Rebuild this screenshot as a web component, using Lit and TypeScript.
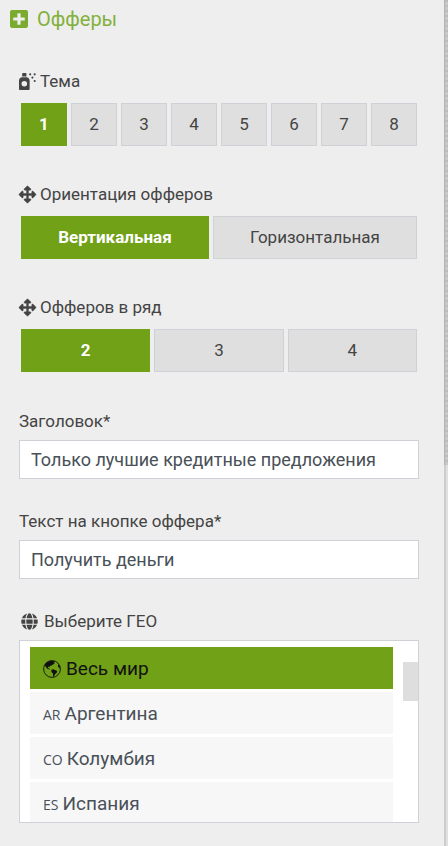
import { LitElement, html, css, svg, nothing } from "lit";
import { customElement, state } from "lit/decorators.js";
import { classMap } from "lit/directives/class-map.js";

const icons = {
  plus: {
    box: "0 32 448 448",
    body: svg`<path d="M400 32H48C21.500 32 0 53.500 0 80v352c0 26.500 21.500 48 48 48h352c26.500 0 48-21.500 48-48V80c0-26.500-21.500-48-48-48zm-32 252c0 6.600-5.400 12-12 12h-92v92c0 6.600-5.400 12-12 12h-56c-6.600 0-12-5.400-12-12v-92H92c-6.600 0-12-5.400-12-12v-56c0-6.600 5.400-12 12-12h92v-92c0-6.600 5.400-12 12-12h56c6.600 0 12 5.400 12 12v92h92c6.600 0 12 5.400 12 12v56z"/>`,
  },
  spray: {
    box: "0 0 512 512",
    body: svg`<path d="M120 0h80c14 0 24 10 24 24v80H96V24C96 10 106 0 120 0z"/>
      <path fill-rule="evenodd" d="M96 128h128c53 0 96 43 96 96v256c0 18-14 32-32 32H32c-18 0-32-14-32-32V224c0-53 43-96 96-96zm64 114a84 84 0 1 0 0 168 84 84 0 1 0 0-168z"/>
      <circle cx="336" cy="40" r="32"/><circle cx="472" cy="40" r="32"/>
      <circle cx="404" cy="138" r="32"/><circle cx="472" cy="240" r="32"/>`,
  },
  arrows: {
    box: "0 0 512 512",
    body: svg`<path stroke="currentColor" stroke-width="14" d="M352.201 425.775l-79.196 79.196c-9.373 9.373-24.568 9.373-33.941 0l-79.196-79.196c-15.119-15.119-4.411-40.971 16.971-40.970h51.162L228 284H127.196v51.162c0 21.382-25.851 32.090-40.971 16.971L7.029 272.937c-9.373-9.373-9.373-24.569 0-33.941L86.225 159.800c15.119-15.119 40.971-4.411 40.971 16.971V228H228V127.196h-51.230c-21.382 0-32.090-25.851-16.971-40.971l79.196-79.196c9.373-9.373 24.568-9.373 33.941 0l79.196 79.196c15.119 15.119 4.411 40.971-16.971 40.971h-51.162V228h100.804v-51.162c0-21.382 25.851-32.090 40.970-16.971l79.196 79.196c9.373 9.373 9.373 24.569 0 33.941L425.773 352.200c-15.119 15.119-40.971 4.411-40.970-16.971V284H284v100.804h51.230c21.382 0 32.090 25.851 16.971 40.971z"/>`,
  },
  globe: {
    box: "-8 0 512 512",
    body: svg`<path d="M336.500 160C322 70.700 287.800 8 248 8s-74 62.700-88.500 152h177zM152 256c0 22.200 1.200 43.500 3.300 64h185.300c2.100-20.500 3.300-41.800 3.300-64s-1.200-43.500-3.300-64H155.300c-2.100 20.500-3.300 41.800-3.300 64zm324.700-96c-28.600-67.900-86.500-120.400-158-141.600 24.400 33.800 41.200 84.700 50 141.600h108zM177.200 18.400C105.800 39.600 47.800 92.100 19.300 160h108c8.700-56.900 25.500-107.800 49.900-141.600zM487.400 192H372.700c2.100 21 3.300 42.500 3.300 64s-1.200 43-3.300 64h114.600c5.500-20.500 8.600-41.800 8.600-64s-3.100-43.500-8.500-64zM120 256c0-21.500 1.200-43 3.300-64H8.600C3.200 212.500 0 233.800 0 256s3.200 43.500 8.600 64h114.600c-2-21-3.200-42.500-3.200-64zm39.500 96c14.500 89.300 48.700 152 88.500 152s74-62.700 88.500-152h-177zm159.300 141.600c71.400-21.200 129.400-73.700 158-141.600h-108c-8.800 56.900-25.600 107.800-50 141.600zM19.300 352c28.600 67.900 86.500 120.400 158 141.600-24.400-33.800-41.200-84.700-50-141.600h-108z"/>`,
  },
  earth: {
    box: "0 0 18 18",
    body: svg`<circle cx="9" cy="9" r="8.400" fill="none" stroke="currentColor" stroke-width=".9"/>
      <path d="M1.500 5C3 2.600 5.500 1 8 .800L11.800 1.200 12 2.200 10.600 2.400 11.600 3.600 10 4.400 8.600 5.600 7.200 5.800 6.800 7 5.400 6.400 4.800 7.600 6 8.400 7.400 9.400 6.600 9.600 4 8.400 2.600 6.400z"/>
      <path d="M8.400 9.800L10.400 9.200 12 10 14.200 11 13.600 13 12 14.200 10.800 16.800 10 16.400 10 13.600 8.400 12z"/>
      <path d="M15.200 4L16.600 6 17.200 8.400 16 7.800 15 6.200z"/>`,
  },
};

type IconName = keyof typeof icons;

const icon = (name: IconName, size = "") => html`
  <svg class="icon ${size}" viewBox=${icons[name].box} aria-hidden="true">${icons[name].body}</svg>
`;

const countries = [
  { code: "", name: "Весь мир" },
  { code: "AR", name: "Аргентина" },
  { code: "CO", name: "Колумбия" },
  { code: "ES", name: "Испания" },
];

@customElement("app-root")
export class AppRoot extends LitElement {
  @state() private theme = "1";
  @state() private orientation = "Вертикальная";
  @state() private perRow = "2";
  @state() private country = "Весь мир";

  static styles = css`
    :host {
      display: block;
      box-sizing: border-box;
      min-height: 100vh;
      padding-right: 4px;
      background: linear-gradient(to right, #cdcdcd 2px, #e0e0e0 2px) right / 4px 100% no-repeat;
      color: #444;
      font: 17px/24px Roboto, "Liberation Sans", sans-serif;
      position: relative;
    }
    *, *::before { box-sizing: border-box; }
    .track {
      position: absolute;
      top: 0;
      right: 0;
      width: 4px;
      height: 55%;
      background: repeating-linear-gradient(#bdbdbd 0 2px, #c8c8c8 2px 5px);
      border-left: 1px solid #b4b4b4;
    }
    .panel {
      min-height: 100vh;
      padding: 0 25px 23px 19px;
      background: #eee;
    }
    .icon {
      flex: none;
      width: 17px;
      height: 17px;
      fill: currentColor;
      overflow: visible;
    }
    .icon.large { width: 18px; height: 18px; }
    .title {
      display: flex;
      align-items: center;
      gap: 9px;
      margin: 0 0 31px -9px;
      color: #82b13c;
      font-size: 20px;
      font-weight: 400;
      line-height: 38px;
    }
    .title .icon { color: #7aab2e; }
    .field { margin-bottom: 30px; }
    .choice { margin-bottom: 34px; }
    .choice .label { margin-bottom: 8px; }
    .choice + .field:not(.choice) { margin-top: 35px; }
    .field:last-child { margin-bottom: 0; }
    .label {
      display: flex;
      align-items: center;
      gap: 4px;
      margin-bottom: 7px;
    }
    .label.wide { gap: 6px; padding-left: 2px; }
    .options {
      display: flex;
      gap: 4px;
      padding: 2px;
    }
    .option {
      flex: 1 1 auto;
      height: 43px;
      padding: 0 0 2px;
      border: 1px solid #ced1d6;
      background: #dfdfdf;
      color: #444;
      font: inherit;
      cursor: pointer;
    }
    .equal .option { flex-basis: 0; }
    .option.on {
      border-color: #70a116;
      background: #70a116;
      color: #fff;
      font-weight: 700;
    }
    .text {
      display: block;
      width: 100%;
      height: 39px;
      padding: 0 11px;
      border: 1px solid #ced1d6;
      border-radius: 0;
      background: #fff;
      color: #495057;
      font: 18px/24px Roboto, "Liberation Sans", sans-serif;
    }
    .geo {
      position: relative;
      height: 183px;
      padding: 6px 25px 0 10px;
      overflow: hidden;
      border: 1px solid #ced1d6;
      background: #fff;
    }
    .thumb {
      position: absolute;
      top: 21px;
      right: 0;
      width: 15px;
      height: 39px;
      background: #dedede;
    }
    .list {
      display: grid;
      gap: 3px;
      margin: 0;
      padding: 0;
      list-style: none;
    }
    .country {
      display: flex;
      align-items: center;
      gap: 5px;
      width: 100%;
      height: 42px;
      padding: 2px 13px 0;
      border: 0;
      background: #f7f7f7;
      color: #495057;
      font: 19px/24px Roboto, "Liberation Sans", sans-serif;
      text-align: left;
      cursor: pointer;
    }
    .country.on { background: #70a116; color: #111; }
    .line {
      display: flex;
      align-items: baseline;
      gap: 4px;
    }
    .code { font: 14px/24px "Open Sans", "Noto Sans", sans-serif; }
  `;

  private options(
    label: string,
    name: IconName,
    values: string[],
    current: string,
    pick: (v: string) => void,
    equal = true,
  ) {
    return html`
      <div class="field choice" role="group" aria-label=${label}>
        <div class="label">${icon(name)}<span>${label}</span></div>
        <div class=${classMap({ options: true, equal })}>
          ${values.map(
            (v) => html`<button
              type="button"
              class=${classMap({ option: true, on: v === current })}
              aria-pressed=${v === current}
              @click=${() => pick(v)}
            >${v}</button>`,
          )}
        </div>
      </div>
    `;
  }

  render() {
    return html`
      <main class="panel">
        <h2 class="title">${icon("plus", "large")}<span>Офферы</span></h2>
        ${this.options("Тема", "spray", ["1", "2", "3", "4", "5", "6", "7", "8"], this.theme, (v) => (this.theme = v))}
        ${this.options("Ориентация офферов", "arrows", ["Вертикальная", "Горизонтальная"], this.orientation, (v) => (this.orientation = v), false)}
        ${this.options("Офферов в ряд", "arrows", ["2", "3", "4"], this.perRow, (v) => (this.perRow = v))}
        <div class="field">
          <label class="label" for="heading">Заголовок*</label>
          <input class="text" id="heading" type="text" required value="Только лучшие кредитные предложения" />
        </div>
        <div class="field">
          <label class="label" for="caption">Текст на кнопке оффера*</label>
          <input class="text" id="caption" type="text" required value="Получить деньги" />
        </div>
        <div class="field" role="group" aria-labelledby="geo">
          <div class="label wide">${icon("globe")}<span id="geo">Выберите ГЕО</span></div>
          <div class="geo">
            <ul class="list">
              ${countries.map(
                (c) => html`<li>
                  <button
                    type="button"
                    class=${classMap({ country: true, on: c.name === this.country })}
                    aria-pressed=${c.name === this.country}
                    @click=${() => (this.country = c.name)}
                  >
                    ${c.code ? nothing : icon("earth", "large")}
                    <span class="line">
                      ${c.code ? html`<span class="code">${c.code}</span>` : nothing}
                      <span>${c.name}</span>
                    </span>
                  </button>
                </li>`,
              )}
            </ul>
            <div class="thumb"></div>
          </div>
        </div>
      </main>
      <div class="track"></div>
    `;
  }
}
